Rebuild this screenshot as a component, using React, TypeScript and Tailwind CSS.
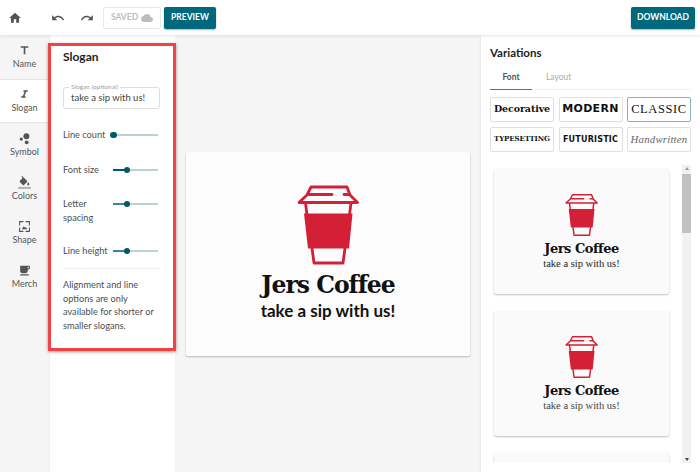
import React from 'react';

const uiFont = "font-['Lato','Noto_Sans','Liberation_Sans',sans-serif]";

const navItems = [
  { label: 'Name', icon: <path d="M5 4v3h5.500v12h3V7H19V4z" /> },
  { label: 'Slogan', icon: <path d="M10 4v3h2.210l-3.420 8H6v3h8v-3h-2.210l3.420-8H18V4z" /> },
  {
    label: 'Symbol',
    icon: (
      <>
        <circle cx="15.500" cy="8" r="5.500" />
        <circle cx="6" cy="13" r="3" />
        <circle cx="16" cy="19" r="3.500" />
      </>
    ),
  },
  {
    label: 'Colors',
    icon: (
      <>
        <path d="M16.560 8.940L7.620 0 6.210 1.410l2.380 2.380-5.150 5.150c-.59.59-.59 1.540 0 2.120l5.500 5.500c.29.29.68.44 1.060.44s.77-.15 1.060-.44l5.500-5.500c.59-.58.59-1.530 0-2.120zM19 11.500s-2 2.170-2 3.500c0 1.100.9 2 2 2s2-.9 2-2c0-1.330-2-3.500-2-3.500z" />
        <rect y="20" width="24" height="4" fill="#b5b5b5" />
      </>
    ),
  },
  {
    label: 'Shape',
    icon: (
      <>
        <path d="M2 2h8v2H4v6H2zM14 2h8v8h-2V4h-6zM2 14h2v6h6v2H2zM20 14h2v8h-8v-2h6z" />
        <path d="M7 17l3.500-5.500 2.500 3 1.500-1.500 2.500 4z" />
      </>
    ),
  },
  {
    label: 'Merch',
    icon: <path d="M20 3H4v10c0 2.210 1.790 4 4 4h6c2.210 0 4-1.790 4-4v-3h2c1.110 0 2-.9 2-2V5c0-1.110-.89-2-2-2zm0 5h-2V5h2v3zM4 19h16v2H4z" />,
  },
];

const sliders = [
  { label: 'Line count', pct: 0, cls: 'mt-[19px]', fill: 'bg-[#00596b]' },
  { label: 'Font size', pct: 31, cls: 'mt-[21px]', fill: 'bg-[#00596b]' },
  { label: 'Letter\nspacing', pct: 31, cls: 'mt-[20px]', fill: 'bg-[#3f8494]' },
  { label: 'Line height', pct: 31, cls: 'mt-[19px]', fill: 'bg-[#3f8494]' },
];

const fontTiles = [
  { label: 'Decorative', cls: "font-['DejaVu_Serif',serif] font-bold text-[9.500px] tracking-[-0.1px]" },
  { label: 'MODERN', cls: "font-['DejaVu_Sans',sans-serif] font-bold text-[11px] tracking-[0.3px]" },
  { label: 'CLASSIC', cls: "font-['Liberation_Serif',serif] text-[12.500px] tracking-[0.6px]" },
  { label: 'TYPESETTING', cls: "font-['DejaVu_Serif',serif] font-bold text-[7px] tracking-[-0.1px]" },
  { label: 'FUTURISTIC', cls: "font-['DejaVu_Sans',sans-serif] font-bold text-[8px] tracking-[0.2px]" },
  { label: 'Handwritten', cls: "font-['Liberation_Serif',serif] italic text-[10.800px] tracking-[0.2px] text-[#666]" },
];

function Cup({ className }: { className: string }) {
  return (
    <svg viewBox="0 0 62 80" className={className}>
      <g fill="none" stroke="#d42036" strokeWidth="2.800" strokeLinejoin="round" strokeLinecap="round">
        <path d="M2 17.500 L10 10 L14 2 H50 L53 10 L60.500 17.500 Z" />
        <path d="M12 9.500 H35 M47 9.500 H52" />
        <path d="M8.500 18 L10 30 M54 18 L52.500 30" />
        <path d="M15 63 L17 78 H46 L48 63" />
      </g>
      <path d="M7 28.500 H55.500 L52 63.500 H11 Z" fill="#d42036" />
    </svg>
  );
}

function Slider({ label, pct, cls, fill }: { label: string; pct: number; cls: string; fill: string }) {
  return (
    <div className={`flex justify-between items-start ${cls}`}>
      <span className="w-[48px] text-[9.200px] leading-[14px] text-[#4a4f4f] whitespace-pre">{label}</span>
      <div className="relative w-[45px] h-[14px]">
        <div className="absolute left-0 right-0 top-[6px] h-[1.500px] bg-[#bcd0d6]" />
        <div className={`absolute left-0 top-[6px] h-[1.500px] ${fill}`} style={{ width: `${pct}%` }} />
        <div className="absolute top-[3.500px] w-[6.500px] h-[6.500px] -ml-[3px] rounded-full bg-[#00596b]" style={{ left: `${pct}%` }} />
      </div>
    </div>
  );
}

function VariationCard({ muted }: { muted?: boolean }) {
  return (
    <div className="w-[175px] h-[125px] shrink-0 rounded-[2px] bg-[#fafafa] shadow-[0_1px_2px_rgba(0,0,0,0.25)] flex flex-col items-center pt-[24px]">
      <Cup className="w-[33px] h-[44px]" />
      <div className="font-['DejaVu_Serif',serif] font-bold text-[13px] leading-[17px] mt-[3px] text-[#111] tracking-[-0.5px]">Jers Coffee</div>
      <div className={`font-['Liberation_Serif',serif] text-[10.500px] leading-[13px] ${muted ? 'text-[#444]' : 'text-[#222]'}`}>take a sip with us!</div>
    </div>
  );
}

export default function App() {
  return (
    <div className={`relative w-[700px] h-[472px] overflow-hidden bg-white flex flex-col ${uiFont}`}>
      {/* top bar */}
      <div className="h-[35px] shrink-0 z-10 bg-white shadow-[0_1px_3px_rgba(0,0,0,0.1)] flex items-center">
        <svg viewBox="0 0 24 24" className="w-[14px] h-[14px] ml-[8px]" fill="#555">
          <path d="M10 20v-6h4v6h5v-8h3L12 3 2 12h3v8z" />
        </svg>
        <svg viewBox="0 0 24 24" className="w-[14px] h-[14px] ml-[29px]" fill="#555">
          <path d="M12.500 8c-2.650 0-5.050.99-6.900 2.600L2 7v9h9l-3.620-3.620c1.390-1.160 3.160-1.880 5.120-1.880 3.540 0 6.550 2.310 7.600 5.500l2.370-.78C21.080 11.030 17.150 8 12.500 8z" />
        </svg>
        <svg viewBox="0 0 24 24" className="w-[14px] h-[14px] ml-[15px]" fill="#555">
          <path d="M18.400 10.600C16.550 8.990 14.150 8 11.500 8c-4.650 0-8.580 3.030-9.960 7.220L3.900 16c1.050-3.190 4.050-5.500 7.600-5.500 1.950 0 3.730.72 5.120 1.880L13 16h9V7l-3.600 3.600z" />
        </svg>
        <div className="ml-[9px] w-[58px] h-[22px] border border-[#e8e8e8] rounded-[2px] flex items-center justify-center gap-[3px]">
          <span className="text-[8.500px] font-bold text-[#bdbdbd]">SAVED</span>
          <svg viewBox="0 0 24 24" className="w-[12px] h-[12px]" fill="#bdbdbd">
            <path d="M19.350 10.040C18.670 6.590 15.640 4 12 4 9.110 4 6.600 5.640 5.350 8.040 2.340 8.360 0 10.910 0 14c0 3.310 2.690 6 6 6h13c2.760 0 5-2.240 5-5 0-2.640-2.050-4.780-4.650-4.960z" />
          </svg>
        </div>
        <button className="ml-[3px] w-[52px] h-[22px] rounded-[2px] bg-[#00687d] text-white text-[8.500px] font-bold shadow-[0_1px_2px_rgba(0,0,0,0.3)]">PREVIEW</button>
        <button className="ml-auto mr-[5px] w-[64px] h-[22px] rounded-[2px] bg-[#00687d] text-white text-[8.500px] font-bold shadow-[0_1px_2px_rgba(0,0,0,0.3)]">DOWNLOAD</button>
      </div>

      <div className="flex flex-1 min-h-0">
        {/* icon nav */}
        <div className="w-[49px] shrink-0 bg-[#f5f5f5] flex flex-col">
          {navItems.map((item) => (
            <div
              key={item.label}
              className={`h-[44px] flex flex-col items-center justify-center text-[#555] ${
                item.label === 'Slogan' ? 'bg-white border-y border-[#e4e4e4]' : ''
              }`}
            >
              <svg viewBox="0 0 24 24" className="w-[13px] h-[13px] mb-[1px]" fill="#555">
                {item.icon}
              </svg>
              <span className="text-[9px] leading-[12px]">{item.label}</span>
            </div>
          ))}
        </div>

        {/* slogan panel */}
        <div className="w-[126px] shrink-0 bg-white border-l border-[#eee] pl-[13px] pt-[14px]">
          <div className="text-[12px] leading-[15px] font-bold text-[#1d1d1d]">Slogan</div>
          <div className="relative mt-[23px] h-[22px] w-[97px] border border-[#ddd] rounded-[3px] pl-[7px] text-[9.500px] leading-[20px] text-[#444]">
            take a sip with us!
            <span className="absolute left-[5px] -top-[5px] bg-white px-[2px] text-[6.500px] leading-[8px] text-[#a0a0a0]">Slogan (optional)</span>
          </div>
          <div className="w-[95px]">
            {sliders.map((s) => (
              <Slider key={s.label} {...s} />
            ))}
          </div>
          <div className="mt-[10px] w-[98px] border-t border-[#eee]" />
          <p className="mt-[9px] w-[100px] text-[9.200px] leading-[13.700px] text-[#4a4f4f]">
            Alignment and line options are only available for shorter or smaller slogans.
          </p>
        </div>

        {/* canvas */}
        <div className="flex-1 bg-[#f5f5f5] pt-[117px] pl-[11px]">
          <div className="w-[284px] h-[204px] rounded-[2px] bg-[#fcfcfc] shadow-[0_1px_2px_rgba(0,0,0,0.25)] flex flex-col items-center pt-[33px]">
            <Cup className="w-[62px] h-[80px]" />
            <div className="font-['DejaVu_Serif',serif] font-bold text-[23.500px] leading-[30px] mt-[5px] text-[#111] tracking-[-1px]">Jers Coffee</div>
            <div className="font-['Lato',sans-serif] font-bold text-[17px] leading-[21px] text-[#111]">take a sip with us!</div>
          </div>
        </div>

        {/* variations */}
        <div className="w-[219px] shrink-0 bg-white flex flex-col pl-[9px] pt-[10px] pb-[9px] shadow-[-1px_0_2px_rgba(0,0,0,0.06)]">
          <div className="text-[11.500px] leading-[15px] font-bold text-[#1d1d1d]">Variations</div>
          <div className="mt-[9px] w-[201px] h-[21px] flex border-b border-[#f0f0f0] text-[8.500px]">
            <div className="w-[42px] h-[21px] border-b border-[#2d8597] text-center leading-[16px] font-bold text-[#555]">Font</div>
            <div className="ml-[14px] leading-[16px] text-[#aaa]">Layout</div>
          </div>
          <div className="mt-[7px] grid grid-cols-[64px_64px_64px] gap-x-[4.500px] gap-y-[5px]">
            {fontTiles.map((t) => (
              <div
                key={t.label}
                className={`h-[25px] rounded-[2px] flex items-center justify-center overflow-hidden text-[#111] whitespace-nowrap border ${
                  t.label === 'CLASSIC' ? 'border-[#7fb4c0]' : 'border-[#e0e0e0]'
                } ${t.cls}`}
              >
                {t.label}
              </div>
            ))}
          </div>
          <div className="mt-[13px] flex-1 min-h-0 flex">
            <div className="w-[192px] overflow-hidden flex flex-col gap-[17px] pl-[4px] pt-[4px]">
              <VariationCard />
              <VariationCard muted />
              <div className="w-[175px] h-[125px] shrink-0 rounded-[2px] bg-[#fafafa] shadow-[0_1px_2px_rgba(0,0,0,0.25)]" />
            </div>
            <div className="w-[9px] bg-[#f1f1f1] relative">
              <div className="absolute top-[2px] left-[2.500px] w-0 h-0 border-x-[2px] border-x-transparent border-b-[3px] border-b-[#999]" />
              <div className="absolute top-[9px] left-0 w-full h-[59px] bg-[#c1c1c1]" />
              <div className="absolute bottom-[2px] left-[2.500px] w-0 h-0 border-x-[2px] border-x-transparent border-t-[3px] border-t-[#444]" />
            </div>
          </div>
        </div>
      </div>

      {/* red annotation box drawn over the screenshot */}
      <div className="absolute left-[48px] top-[43px] w-[128px] h-[308px] border-[3px] border-[#f04343] shadow-[0_1px_3px_rgba(0,0,0,0.4)] pointer-events-none" />
    </div>
  );
}
